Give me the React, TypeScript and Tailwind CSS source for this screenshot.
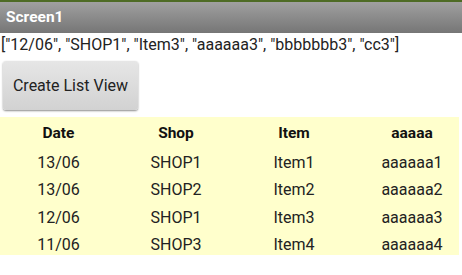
const rows = [
  ['13/06', 'SHOP1', 'Item1', 'aaaaaa1'],
  ['13/06', 'SHOP2', 'Item2', 'aaaaaa2'],
  ['12/06', 'SHOP1', 'Item3', 'aaaaaa3'],
  ['11/06', 'SHOP3', 'Item4', 'aaaaaa4'],
]

const widths = ['w-[117px]', 'w-[118px]', 'w-[118px]', 'w-[118px]']

export default function App() {
  return (
    <div className="w-[462px] h-[275px] bg-white overflow-hidden font-['Roboto',sans-serif] text-[#222]">
      {/* title bar */}
      <div className="h-[2px] bg-[#4e6b25]" />
      <div className="h-[31px] flex items-center px-[6px] bg-gradient-to-b from-[#a0a0a0] to-[#767676]">
        <span className="text-white font-bold text-[15.5px]">Screen1</span>
      </div>

      <div className="px-px pt-[2px] text-[16px] leading-[20px]">
        ["12/06", "SHOP1", "Item3", "aaaaaa3", "bbbbbbb3", "cc3"]
      </div>

      <div className="px-[3px] pt-[6px]">
        <button className="w-[135px] h-[49px] rounded-[3px] bg-gradient-to-b from-[#e6e6e6] to-[#d2d2d2] shadow-[0_1px_2px_rgba(0,0,0,0.45)] text-[16px] text-[#222]">
          Create List View
        </button>
      </div>

      <div className="mt-[7px] w-[459px] h-[138px] pt-px bg-[#ffffcc] overflow-hidden">
        <div className="flex h-[30px] pt-px items-center font-bold text-[15.5px] text-[#111]">
          {['Date', 'Shop', 'Item', 'aaaaa'].map((h, i) => (
            <div key={h} className={`${widths[i]} shrink-0 text-center`}>{h}</div>
          ))}
        </div>
        <div className="pt-px">
          {rows.map(r => (
            <div key={r[0] + r[1]} className="flex h-[27.5px] items-center text-[16px]">
              {r.map((c, i) => (
                <div key={i} className={`${widths[i]} shrink-0 text-center`}>{c}</div>
              ))}
            </div>
          ))}
        </div>
      </div>
    </div>
  )
}
